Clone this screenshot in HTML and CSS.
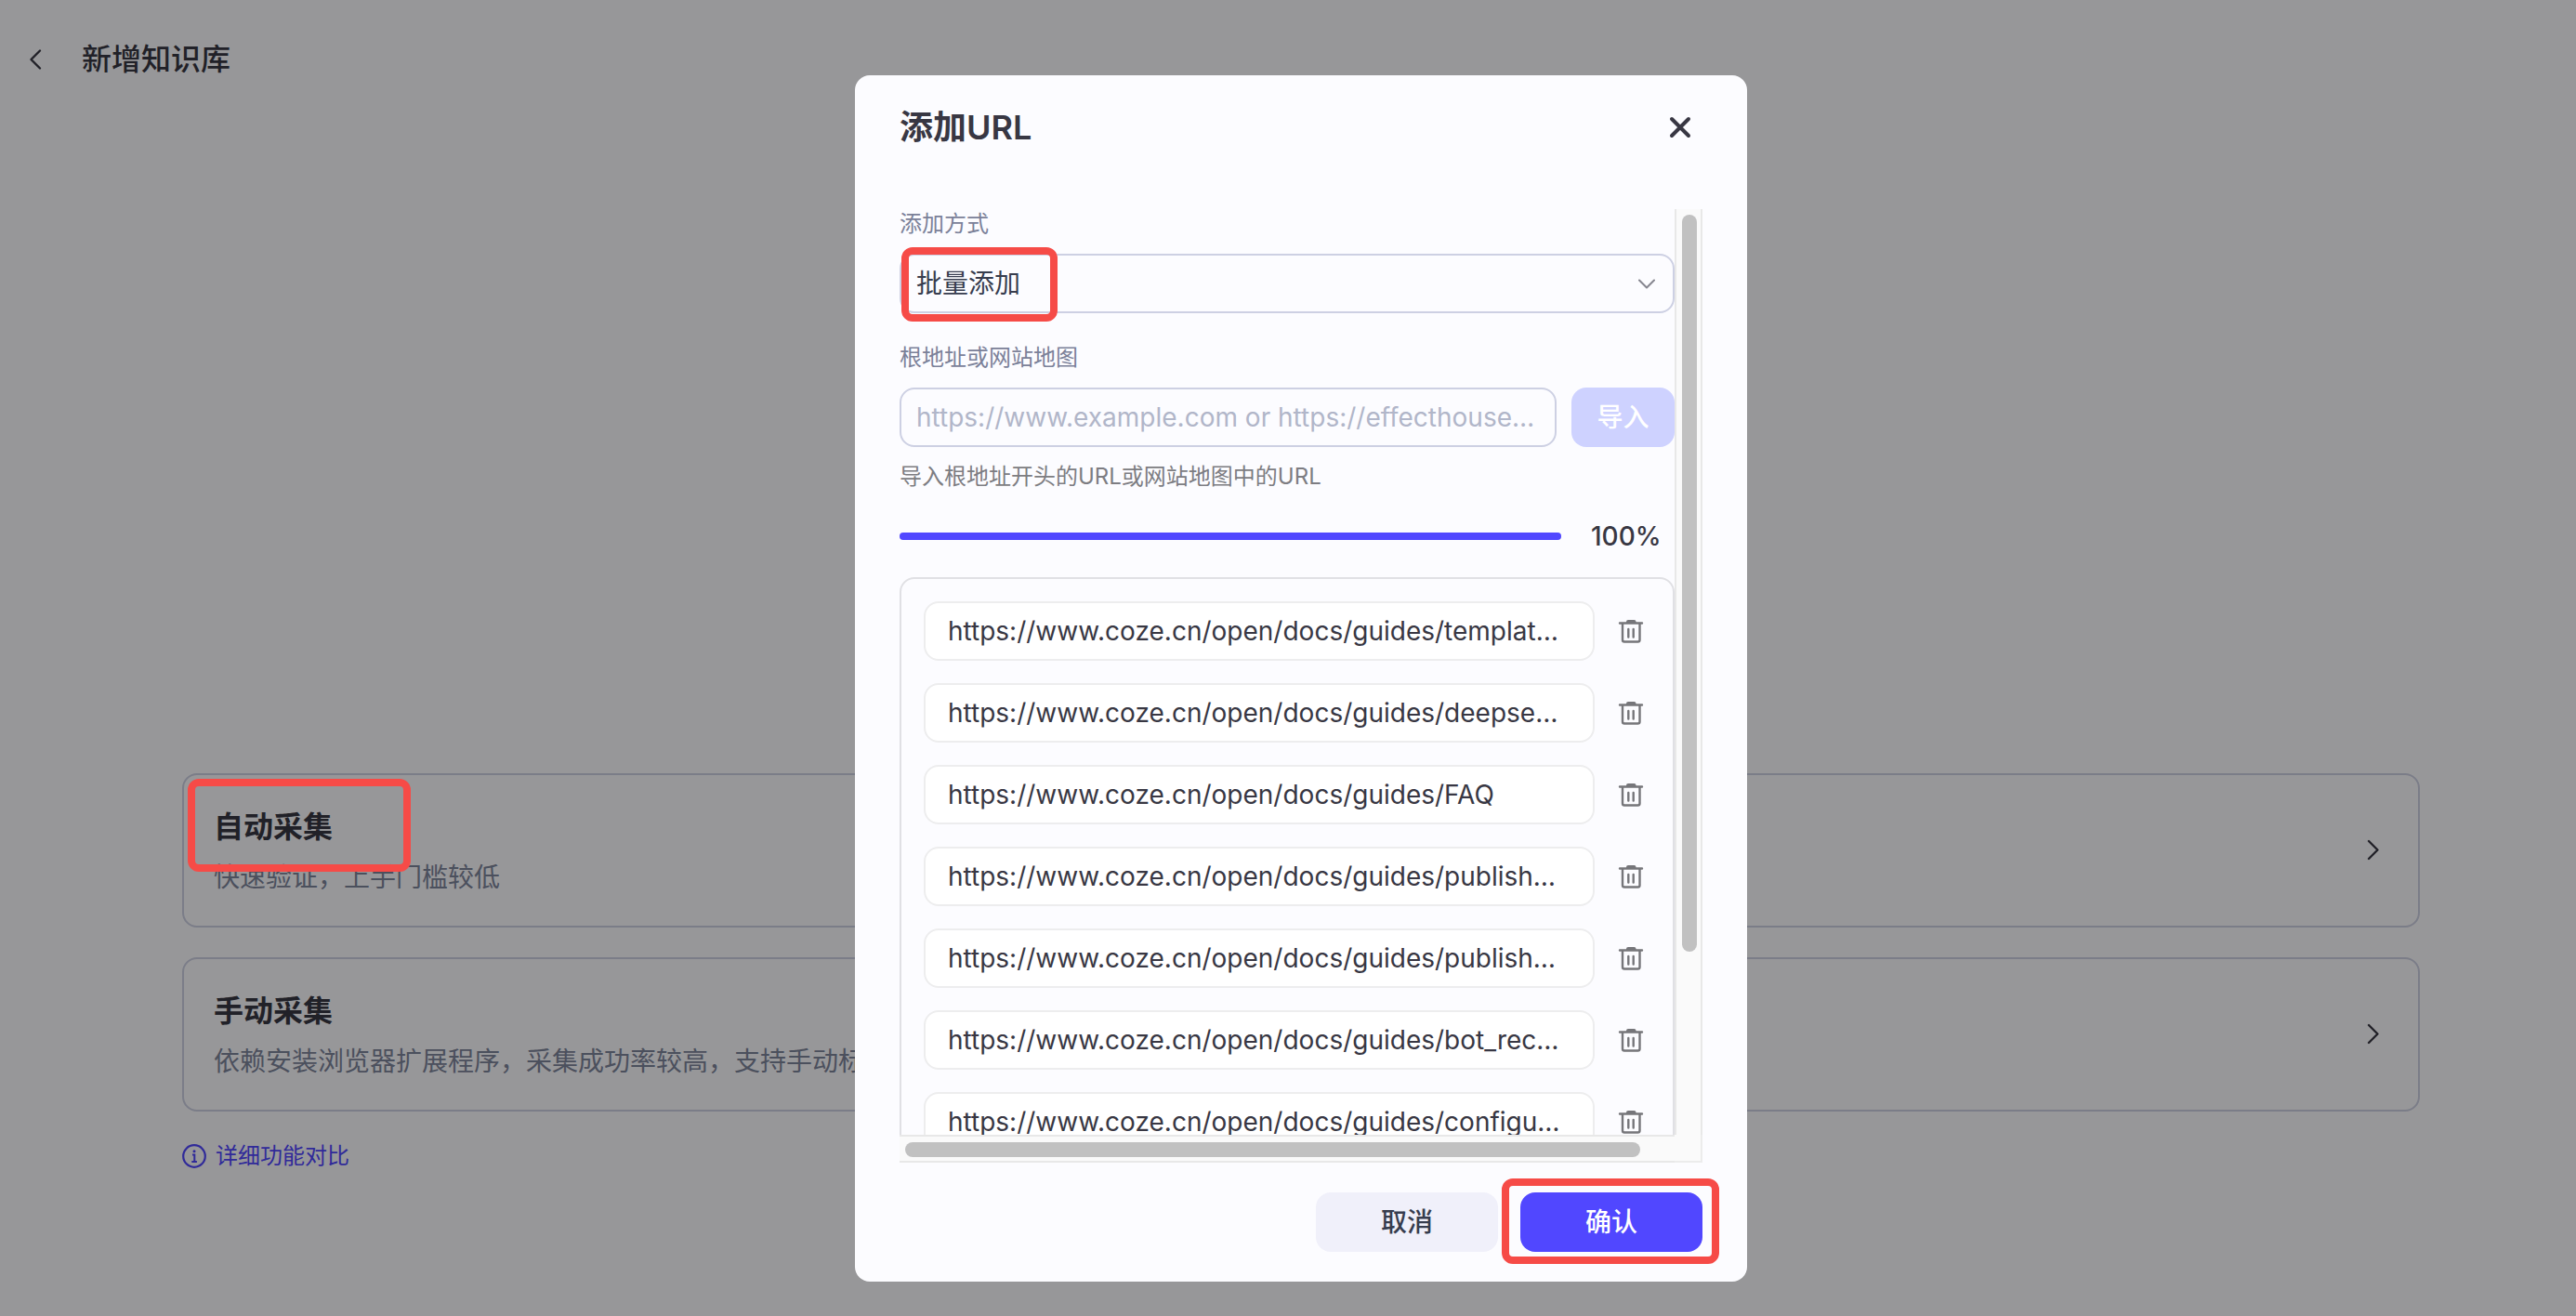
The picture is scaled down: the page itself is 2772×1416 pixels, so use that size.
FILE: index.html
```html
<!DOCTYPE html>
<html lang="zh-CN">
<head>
<meta charset="utf-8">
<meta name="viewport" content="width=device-width, initial-scale=1">
<title>新增知识库</title>
<link rel="stylesheet" href="styles.css">
</head>
<body>
<svg class="sprite" aria-hidden="true">
  <symbol id="trash" viewBox="0 0 28 28">
    <path d="M2 5.500h24M5 6v17.500a2 2 0 0 0 2 2h14.500a2 2 0 0 0 2-2V6M11.300 12v8.500M16.700 12v8.500" fill="none" stroke="currentColor" stroke-width="2.400" stroke-linecap="round" stroke-linejoin="round"/>
    <path d="M9 5.500V4a2 2 0 0 1 2-2h6.500a2 2 0 0 1 2 2v1.500z" fill="currentColor"/>
  </symbol>
  <symbol id="chevron-right" viewBox="0 0 24 24">
    <path d="M7 2 16.500 11.500 7 21" fill="none" stroke="currentColor" stroke-width="2.400" stroke-linecap="round" stroke-linejoin="round"/>
  </symbol>
</svg>

<header class="topbar">
  <button class="icon-button" type="button" aria-label="返回">
    <svg viewBox="0 0 24 24" width="24" height="24"><path d="M17 2.500 7.500 12l9.500 9.500" fill="none" stroke="currentColor" stroke-width="2.400" stroke-linecap="round" stroke-linejoin="round"/></svg>
  </button>
  <h1 class="topbar-title">新增知识库</h1>
</header>

<main class="options">
  <button class="card" type="button">
    <span class="card-text">
      <span class="card-title">自动采集</span>
      <span class="card-desc">快速验证，上手门槛较低</span>
    </span>
    <svg class="card-arrow"><use href="#chevron-right"/></svg>
    <span class="mark mark-card"></span>
  </button>
  <button class="card" type="button">
    <span class="card-text">
      <span class="card-title">手动采集</span>
      <span class="card-desc">依赖安装浏览器扩展程序，采集成功率较高，支持手动标注内容</span>
    </span>
    <svg class="card-arrow"><use href="#chevron-right"/></svg>
  </button>
  <a class="compare" href="#">
    <svg viewBox="0 0 26 26" width="26" height="26"><circle cx="13" cy="13" r="11.800" fill="none" stroke="currentColor" stroke-width="2.200"/><circle cx="13" cy="7.800" r="1.500" fill="currentColor"/><path d="M11 11.500h2.300v7.300M10.300 19h5.600" fill="none" stroke="currentColor" stroke-width="2"/></svg>
    详细功能对比
  </a>
</main>

<div class="overlay">
  <section class="modal" role="dialog" aria-modal="true" aria-labelledby="modal-title">
    <header class="modal-head">
      <h2 class="modal-title" id="modal-title">添加URL</h2>
      <button class="icon-button close" type="button" aria-label="关闭">
        <svg viewBox="0 0 24 24" width="24" height="24"><path d="m3 3 18 18M21 3 3 21" fill="none" stroke="currentColor" stroke-width="4" stroke-linecap="round"/></svg>
      </button>
    </header>

    <div class="scroller">
      <div class="viewport">
        <label class="label" for="mode">添加方式</label>
        <div class="select-wrap">
          <select class="field select" id="mode">
            <option>批量添加</option>
          </select>
          <svg class="select-arrow" viewBox="0 0 20 12"><path d="m2 1.500 8 8 8-8" fill="none" stroke="currentColor" stroke-width="2" stroke-linecap="round" stroke-linejoin="round"/></svg>
          <span class="mark mark-select"></span>
        </div>

        <label class="label" for="root">根地址或网站地图</label>
        <div class="import-row">
          <input class="field" id="root" type="text" placeholder="https://www.example.com or https://effecthouse…">
          <button class="button import" type="button" disabled>导入</button>
        </div>
        <p class="hint">导入根地址开头的URL或网站地图中的URL</p>

        <div class="progress">
          <div class="progress-track" role="progressbar" aria-valuenow="100" aria-label="导入进度"><div class="progress-fill" style="width:100%"></div></div>
          <span class="progress-value">100%</span>
        </div>

        <ul class="urls">
          <li class="url"><input class="field url-field" readonly aria-label="URL 1" value="https://www.coze.cn/open/docs/guides/templat…"><button class="icon-button delete" type="button" aria-label="删除"><svg class="trash"><use href="#trash"/></svg></button></li>
          <li class="url"><input class="field url-field" readonly aria-label="URL 2" value="https://www.coze.cn/open/docs/guides/deepse…"><button class="icon-button delete" type="button" aria-label="删除"><svg class="trash"><use href="#trash"/></svg></button></li>
          <li class="url"><input class="field url-field" readonly aria-label="URL 3" value="https://www.coze.cn/open/docs/guides/FAQ"><button class="icon-button delete" type="button" aria-label="删除"><svg class="trash"><use href="#trash"/></svg></button></li>
          <li class="url"><input class="field url-field" readonly aria-label="URL 4" value="https://www.coze.cn/open/docs/guides/publish…"><button class="icon-button delete" type="button" aria-label="删除"><svg class="trash"><use href="#trash"/></svg></button></li>
          <li class="url"><input class="field url-field" readonly aria-label="URL 5" value="https://www.coze.cn/open/docs/guides/publish…"><button class="icon-button delete" type="button" aria-label="删除"><svg class="trash"><use href="#trash"/></svg></button></li>
          <li class="url"><input class="field url-field" readonly aria-label="URL 6" value="https://www.coze.cn/open/docs/guides/bot_rec…"><button class="icon-button delete" type="button" aria-label="删除"><svg class="trash"><use href="#trash"/></svg></button></li>
          <li class="url"><input class="field url-field" readonly aria-label="URL 7" value="https://www.coze.cn/open/docs/guides/configu…"><button class="icon-button delete" type="button" aria-label="删除"><svg class="trash"><use href="#trash"/></svg></button></li>
        </ul>
      </div>
      <div class="bar bar-y"><div class="thumb thumb-y"></div></div>
      <div class="bar bar-x"><div class="thumb thumb-x"></div></div>
      <div class="bar-corner"></div>
    </div>

    <footer class="modal-foot">
      <button class="button cancel" type="button">取消</button>
      <div class="confirm-wrap">
        <button class="button confirm" type="button">确认</button>
        <span class="mark mark-confirm"></span>
      </div>
    </footer>
  </section>
</div>
</body>
</html>
```
FILE: styles.css
```css
*, *::before, *::after { box-sizing: border-box; }

:root {
  --ink: #383743;
  --line: #cdd0e3;
  --primary: #5147ff;
  --surface: #fcfcff;
  --mark: #f64b47;
}

body {
  margin: 0;
  min-height: 100vh;
  background: var(--surface);
  color: var(--ink);
  font: 400 28px/36px Inter, "Noto Sans CJK SC", sans-serif;
}

button, input, select { font: inherit; color: inherit; }
h1, h2, p, ul { margin: 0; padding: 0; }
ul { list-style: none; }
.sprite { display: none; }

.icon-button {
  display: flex;
  align-items: center;
  justify-content: center;
  padding: 0;
  border: 0;
  background: none;
}

/* Page */
.topbar {
  display: flex;
  align-items: center;
  gap: 38px;
  height: 128px;
  padding-left: 26px;
}
.topbar-title { font-size: 32px; line-height: 40px; font-weight: 500; }

.options {
  display: flex;
  flex-direction: column;
  gap: 32px;
  padding: 704px 168px 0 196px;
}
.card {
  position: relative;
  display: flex;
  align-items: center;
  justify-content: space-between;
  padding: 32px 36px 32px 32px;
  border: 2px solid var(--line);
  border-radius: 16px;
  background: none;
  text-align: left;
}
.card-text { display: flex; flex-direction: column; gap: 10px; }
.card-title { font-size: 32px; line-height: 48px; font-weight: 600; }
.card-desc { line-height: 40px; color: #7e859c; }
.card-arrow { width: 24px; height: 24px; }

.compare {
  display: flex;
  align-items: center;
  align-self: flex-start;
  gap: 10px;
  font-size: 24px;
  line-height: 32px;
  color: var(--primary);
  text-decoration: none;
}

/* Highlight frames */
.mark {
  position: absolute;
  z-index: 20;
  border: 8px solid var(--mark);
  border-radius: 12px;
  pointer-events: none;
}
.mark-card { left: 4px; top: 4px; width: 240px; height: 100px; }
.mark-select { left: 2px; top: -7px; width: 168px; height: 80px; }
.mark-confirm { inset: -15px -18px -13px -20px; }

/* Dialog */
.overlay {
  position: fixed;
  inset: 0;
  z-index: 10;
  display: flex;
  justify-content: center;
  padding: 81px 0 37px 28px;
  background: rgba(0, 0, 0, .4);
}
.modal {
  display: flex;
  flex-direction: column;
  width: 960px;
  padding: 32px 48px;
  border-radius: 16px;
  background: var(--surface);
}
.modal-head {
  display: flex;
  align-items: center;
  justify-content: space-between;
  padding-bottom: 64px;
}
.modal-title { font-size: 36px; line-height: 48px; font-weight: 600; }
.close { width: 48px; height: 48px; }

.scroller {
  display: grid;
  grid-template: minmax(0, 1fr) 30px / minmax(0, 1fr) 30px;
  flex: 1;
  min-height: 0;
}
.viewport { overflow: hidden; }
.bar { background: #fafafa; }
.bar-y { padding: 6px; border: solid #e8e8e8; border-width: 0 2px; }
.bar-x { padding: 6px; border: solid #e8e8e8; border-width: 2px 0; }
.bar-corner { background: #fafafa; border: solid #ececec; border-width: 0 2px 2px 0; }
.thumb { border-radius: 8px; background: #c1c1c1; }
.thumb-y { width: 16px; height: 80.6%; }
.thumb-x { width: 96.2%; height: 16px; }

.label {
  display: block;
  padding-bottom: 16px;
  font-size: 24px;
  line-height: 32px;
  color: #7b8199;
}
.field {
  width: 100%;
  height: 64px;
  padding: 0 16px;
  border: 2px solid var(--line);
  border-radius: 16px;
  background: none;
  outline: 0;
  text-overflow: ellipsis;
}
.field::placeholder { color: #b1b6c9; opacity: 1; }
.select-wrap { position: relative; margin-bottom: 32px; }
.select { display: block; appearance: none; color: #373d4e; }
.select-arrow {
  position: absolute;
  right: 20px;
  top: 27px;
  width: 20px;
  height: 12px;
  color: #86868f;
  pointer-events: none;
}
.import-row { display: flex; gap: 16px; }
.hint {
  padding: 16px 0 28px;
  font-size: 24px;
  line-height: 32px;
  color: #7d7d82;
}

.button {
  height: 64px;
  padding: 0;
  border: 0;
  border-radius: 16px;
  font-weight: 500;
}
.import { flex: 0 0 111px; background: #ced2ff; color: #fff; }

.progress { display: flex; align-items: center; gap: 32px; margin-bottom: 24px; }
.progress-track { flex: 1; height: 8px; border-radius: 4px; background: #e6e6ee; }
.progress-fill { height: 100%; border-radius: 4px; background: var(--primary); }
.progress-value { width: 90px; line-height: 40px; font-weight: 500; }

.urls {
  display: grid;
  gap: 24px;
  padding: 24px;
  border: 2px solid #e0e0e4;
  border-radius: 16px;
}
.url { display: flex; gap: 18px; }
.url-field { flex: 1; min-width: 0; padding: 0 24px; border-color: #ededee; background: #fff; }
.delete { width: 42px; color: #76767a; }
.trash { width: 28px; height: 28px; }

.modal-foot { display: flex; justify-content: flex-end; gap: 24px; padding-top: 32px; }
.confirm-wrap { position: relative; display: flex; }
.cancel, .confirm { width: 196px; }
.cancel { background: #f0f0fa; color: #373d4e; }
.confirm { background: var(--primary); color: #fff; }
```
